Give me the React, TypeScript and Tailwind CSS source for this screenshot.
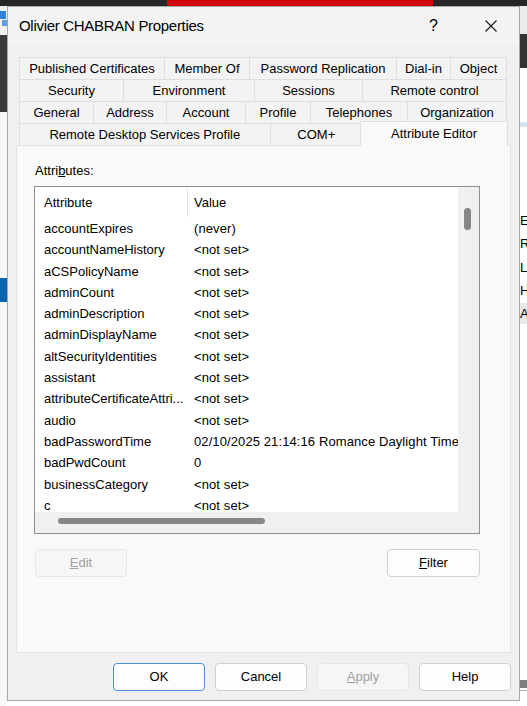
import React from 'react';

type Tab = { label: string; w: string };

const tabRows: Tab[][] = [
  [
    { label: 'Published Certificates', w: 'w-[145px]' },
    { label: 'Member Of', w: 'w-[85px]' },
    { label: 'Password Replication', w: 'w-[147px]' },
    { label: 'Dial-in', w: 'w-[54px]' },
    { label: 'Object', w: 'w-[57px]' },
  ],
  [
    { label: 'Security', w: 'w-[104px]' },
    { label: 'Environment', w: 'w-[131px]' },
    { label: 'Sessions', w: 'w-[108px]' },
    { label: 'Remote control', w: 'w-[145px]' },
  ],
  [
    { label: 'General', w: 'w-[74px]' },
    { label: 'Address', w: 'w-[73px]' },
    { label: 'Account', w: 'w-[79px]' },
    { label: 'Profile', w: 'w-[65px]' },
    { label: 'Telephones', w: 'w-[97px]' },
    { label: 'Organization', w: 'w-[100px]' },
  ],
];

const attributes: [string, string][] = [
  ['accountExpires', '(never)'],
  ['accountNameHistory', '<not set>'],
  ['aCSPolicyName', '<not set>'],
  ['adminCount', '<not set>'],
  ['adminDescription', '<not set>'],
  ['adminDisplayName', '<not set>'],
  ['altSecurityIdentities', '<not set>'],
  ['assistant', '<not set>'],
  ['attributeCertificateAttri...', '<not set>'],
  ['audio', '<not set>'],
  ['badPasswordTime', '02/10/2025 21:14:16 Romance Daylight Time'],
  ['badPwdCount', '0'],
  ['businessCategory', '<not set>'],
  ['c', '<not set>'],
  ['canonicalName', 'example.local/Users/Olivier CHABRAN'],
];

// bits of the windows behind the dialog
function Desktop() {
  return (
    <>
      <div className="absolute inset-x-0 top-0 h-[6px] bg-[#262626]" />
      <div className="absolute left-[167px] top-0 h-[6px] w-[266px] bg-[#d1000b]" />

      <div className="absolute left-0 top-[6px] h-[29px] w-[7px] bg-[#f0f0f0]" />
      <div className="absolute left-0 top-[11px] h-[8px] w-[6px] bg-[#2f80d8]" />
      <div className="absolute left-[2px] top-[20px] h-[6px] w-[5px] bg-[#5a9ee6]" />
      <div className="absolute left-0 top-[35px] h-[77px] w-[7px] bg-[#3a3a3a]" />
      <div className="absolute left-0 top-[112px] h-[594px] w-[7px] bg-[#f9f9f9]" />
      <div className="absolute left-0 top-[278px] h-[24px] w-[7px] bg-[#0a64ad]" />

      <div className="absolute left-[520px] top-[6px] h-[28px] w-[7px] bg-[#ececec]" />
      <div className="absolute left-[520px] top-[34px] h-[34px] w-[7px] bg-[#333333]" />
      <div className="absolute left-[520px] top-[122px] h-[5px] w-[7px] bg-[#d8e4f0]" />
      <div className="absolute left-[520px] top-[303px] h-[21px] w-[7px] bg-[#e9e9e9]" />
      <div className="absolute left-[520px] top-[209px] flex w-[7px] flex-col overflow-hidden text-[13px] leading-[23.3px] whitespace-nowrap">
        <span>E</span>
        <span>R</span>
        <span>L</span>
        <span>H</span>
        <span>A</span>
      </div>
      <div className="absolute left-[520px] top-[680px] h-[8px] w-[7px] bg-[#7d7d7d]" />
      <div className="absolute left-[520px] top-[690px] h-px w-[7px] bg-[#b0b0b0]" />
    </>
  );
}

function TabStrip() {
  return (
    <div className="mx-[3px] flex flex-col text-[13px]">
      {tabRows.map((row, i) => (
        <div key={i} className="flex h-[22px]">
          {row.map((t, j) => (
            <div
              key={t.label}
              className={`${t.w} flex items-center justify-center border-t border-l border-[#dedede] bg-[#f3f3f3] ${j === row.length - 1 ? 'border-r' : ''}`}
            >
              {t.label}
            </div>
          ))}
        </div>
      ))}
      <div className="flex h-[22px]">
        <div className="flex w-[252px] items-center justify-center border-t border-l border-[#dedede] bg-[#f3f3f3]">
          Remote Desktop Services Profile
        </div>
        <div className="flex w-[93px] items-center justify-center border-t border-l border-[#dedede] bg-[#f3f3f3]">
          COM+
        </div>
        <div className="relative z-10 -ml-[2px] -mt-[2px] flex h-[25px] w-[148px] shrink-0 items-center justify-center border-t border-l border-r border-[#dedede] bg-[#f9f9f9]">
          Attribute Editor
        </div>
      </div>
    </div>
  );
}

function AttributeList() {
  return (
    <div className="ml-[17px] mt-[7px] grid h-[348px] w-[446px] grid-cols-[423px_21px] grid-rows-[325px_21px] border border-[#8c8f94] bg-white text-[13px]">
      <div className="overflow-hidden">
        <div className="flex h-[31px] items-center">
          <div className="w-[152px] pl-[9px]">Attribute</div>
          <div className="my-px w-px self-stretch bg-[#e5e5e5]" />
          <div className="pl-[6px]">Value</div>
        </div>
        {attributes.map(([name, value]) => (
          <div key={name} className="flex h-[21.3px] items-center whitespace-nowrap leading-[21.3px]">
            <div className="w-[153px] shrink-0 overflow-hidden pl-[9px]">{name}</div>
            <div className="pl-[6px] tracking-[0.1px]">{value}</div>
          </div>
        ))}
      </div>
      <div className="bg-[#f0f0f0] pl-[6px] pt-[21px]">
        <div className="h-[22px] w-[7px] rounded-full bg-[#868686]" />
      </div>
      <div className="bg-[#f0f0f0] pl-[23px] pt-[6px]">
        <div className="h-[6px] w-[207px] rounded-full bg-[#868686]" />
      </div>
      <div className="bg-[#f0f0f0]" />
    </div>
  );
}

function Button({ children, disabled, primary, w = 'w-[92px]' }: { children: React.ReactNode; disabled?: boolean; primary?: boolean; w?: string }) {
  const tone = disabled
    ? 'bg-[#f6f6f6] border-[#e6e6e6] text-[#a0a0a0]'
    : primary
      ? 'bg-[#fdfdfd] border-[#4a8fd8] text-black'
      : 'bg-[#fdfdfd] border-[#d0d0d0] text-black';
  return (
    <div className={`${w} flex h-[28px] items-center justify-center rounded-[4px] border text-[13px] ${tone}`}>
      {children}
    </div>
  );
}

export default function App() {
  return (
    <div className="relative h-[706px] w-[527px] overflow-hidden bg-white font-['Liberation_Sans',Arial,sans-serif] text-black">
      <Desktop />

      <div className="absolute left-[7px] top-[6px] flex h-[695px] w-[513px] flex-col border border-[#a9a9a9] bg-[#f0f0f0]">
        {/* title bar */}
        <div className="flex h-[38px] items-center bg-[#f3f3f3]">
          <div className="flex-1 pl-[11px] text-[15px] tracking-[-0.3px]">Olivier CHABRAN Properties</div>
          <div className="flex h-full w-[57px] items-center justify-center text-[16px]">?</div>
          <div className="flex h-full w-[57px] items-center justify-center">
            <svg width="12" height="12" viewBox="0 0 12 12">
              <path d="M0.5 0.5L11.5 11.5M11.5 0.5L0.5 11.5" stroke="#1a1a1a" strokeWidth="1.1" fill="none" />
            </svg>
          </div>
        </div>

        <div className="flex flex-col px-[8px] pt-[12px]">
          <TabStrip />

          {/* tab page */}
          <div className="flex h-[508px] flex-col border border-[#e3e3e3] bg-[#f9f9f9]">
            <div className="pl-[18px] pt-[17px] text-[13px] leading-[16px]">
              Attri<span className="underline">b</span>utes:
            </div>
            <AttributeList />
            <div className="ml-[17px] mt-[15px] flex w-[446px] justify-between">
              <div className="ml-px">
                <Button disabled>
                  <span className="underline">E</span>dit
                </Button>
              </div>
              <Button w="w-[93px]">
                <span className="underline">F</span>ilter
              </Button>
            </div>
          </div>

          <div className="mt-[10px] flex justify-end gap-[10px]">
            <Button primary>OK</Button>
            <Button>Cancel</Button>
            <Button disabled>
              <span className="underline">A</span>pply
            </Button>
            <Button>Help</Button>
          </div>
        </div>
      </div>
    </div>
  );
}
